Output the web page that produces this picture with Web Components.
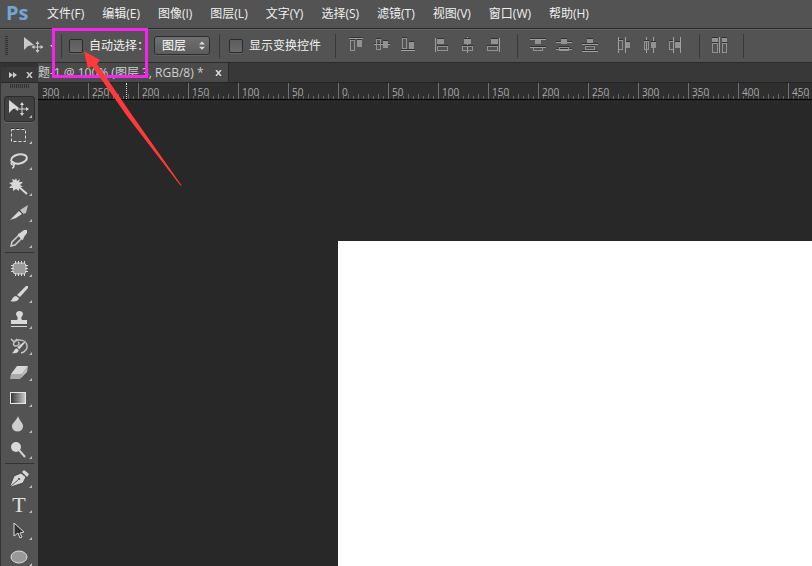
<!DOCTYPE html>
<html lang="zh-CN">
<head>
<meta charset="utf-8">
<title>Ps</title>
<style>
html,body{margin:0;height:100%;background:#282828;overflow:hidden}
body{font:12px/16px "Open Sans","Noto Sans CJK SC",sans-serif;color:#f0f0f0}
</style>
</head>
<body>
<ps-app></ps-app>
<script>
const define = (name, html, setup) => customElements.define(name, class extends HTMLElement {
  connectedCallback() {
    if (this.shadowRoot) return;
    const root = this.attachShadow({mode: 'open'});
    root.innerHTML = '<style>*{box-sizing:border-box}button{font:inherit;color:inherit;background:none;border:0;padding:0;margin:0}svg{display:block}</style>' + html;
    if (setup) setup(root, this);
  }
});

define('ps-menu-bar', `
<style>
:host{display:flex;align-items:center;height:28px;flex:none;background:#535353;padding-left:6px}
.logo{font:bold 20px/24px "Open Sans",sans-serif;color:#73a5d8;width:41px;padding-bottom:2px}
nav{display:flex;flex:0 1 542px;justify-content:space-between;white-space:nowrap}
</style>
<span class="logo">Ps</span><nav></nav>`, root => {
  const nav = root.querySelector('nav');
  for (const t of ['文件(F)','编辑(E)','图像(I)','图层(L)','文字(Y)','选择(S)','滤镜(T)','视图(V)','窗口(W)','帮助(H)']) {
    const b = document.createElement('button');
    b.textContent = t;
    nav.append(b);
  }
});

define('ps-check', `
<style>
:host{display:block}
label{display:flex;align-items:center;gap:6px;white-space:nowrap}
input{appearance:none;width:14px;height:14px;margin:0;border:1px solid #2b2b2b;border-radius:2px;background:linear-gradient(#5c5c5c,#6a6a6a);box-shadow:0 1px #626262}
</style>
<label><input type="checkbox"><span><slot></slot></span></label>`);

/* Alignment glyphs: H = hollow box, F = filled box, L = rule */
const H = (x,y,w,h) => `<rect x="${x+.5}" y="${y+.5}" width="${w-1}" height="${h-1}" fill="none" stroke="#929292"/><path d="M${x} ${y-.5}h${w}" stroke="#333"/>`;
const F = (x,y,w,h) => `<rect x="${x}" y="${y}" width="${w}" height="${h}" fill="#929292"/><path d="M${x} ${y-.5}h${w}" stroke="#333"/>`;
const L = (x,y,w,h) => `<rect x="${x}" y="${y}" width="${w}" height="${h}" fill="#a0a0a0"/>` + (w > h ? `<rect x="${x}" y="${y-1}" width="${w}" height="1" fill="#333"/>` : '');
const ALIGN = [
  ['顶对齐', H(3,5,5,11)+F(10,5,5,7)+L(2,3,14,1)],
  ['垂直居中对齐', L(1,9,16,1)+H(3,4,5,11)+F(10,6,5,7)],
  ['底对齐', H(3,3,5,11)+F(10,7,5,7)+L(2,15,14,1)],
  null,
  ['左对齐', F(4,4,7,5)+H(4,11,11,5)+L(2,3,1,14)],
  ['水平居中对齐', L(8,2,1,16)+F(5,4,7,5)+H(3,11,11,5)],
  ['右对齐', F(6,4,7,5)+H(2,11,11,5)+L(14,3,1,14)],
  'sep',
  ['按顶分布', F(6,5,6,4)+H(4,12,10,4)+L(1,4,16,1)+L(1,12,16,1)],
  ['按中分布', L(1,7,16,1)+L(1,14,16,1)+F(6,4,6,5)+H(4,12,10,4)],
  ['按底分布', F(6,4,6,4)+H(4,11,10,4)+L(1,9,16,1)+L(1,16,16,1)],
  null,
  ['按左分布', H(3,5,5,10)+F(10,7,5,6)+L(3,2,1,16)+L(10,2,1,16)],
  ['按中线分布', L(5,2,1,16)+L(12,2,1,16)+H(3,6,5,9)+F(10,7,5,6)],
  ['按右分布', H(2,6,5,9)+F(8,7,5,6)+L(6,2,1,16)+L(13,2,1,16)],
  'sep',
  ['自动对齐', F(1,3,6,4)+H(1,8,6,10)+L(8,2,1,16)+F(11,3,5,4)+H(11,8,5,10)],
  'sep'
];
define('ps-options-bar', `
<style>
:host{display:flex;align-items:center;height:35px;flex:none;background:#535353;border-top:1px solid #2b2b2b;border-bottom:1px solid #2b2b2b;box-shadow:inset 0 1px #646464;white-space:nowrap;padding-left:5px}
.grip{width:3px;height:20px;margin-right:15px;background:repeating-linear-gradient(#303030 0 1px,#535353 1px 2px)}
.tool{width:34px;height:20px}
.sep{width:1px;height:24px;background:#383838;flex:none}
.s1{margin-left:4px}
.s2{margin-left:14px}
ps-check{margin-left:7px}
.wide{margin-left:9px}
select{appearance:none;font:inherit;color:#fff;width:56px;height:19px;padding:0 7px;margin-left:5px;margin-right:9px;border:1px solid #2c2c2c;border-radius:3px;background:linear-gradient(#707070,#5b5b5b);box-shadow:0 1px #616161}
.pick{position:relative;display:flex}
.pick svg{position:absolute;right:14px;top:5px;pointer-events:none}
.align{display:flex;align-items:center;gap:8px;margin-left:12px}
.align svg{fill:none}
.gap{width:0}
.align .sep{margin:0 4px 0 5px}
</style>
<span class="grip"></span>
<svg class="tool" viewBox="0 0 34 20"><path d="M1 1v13l4-4 6-1z" fill="#c9c9c9"/><path d="M14.500 6v10M9.500 11h10" stroke="#c9c9c9"/><path d="m12.500 8 2-3 2 3zm0 6 2 3 2-3zm-1-5-3 2 3 2zm6 0 3 2-3 2z" fill="#c9c9c9"/><path d="M27 9h5l-2.500 3z" fill="#c9c9c9"/></svg>
<span class="sep s1"></span>
<ps-check>自动选择：</ps-check>
<span class="pick"><select aria-label="自动选择"><option>图层</option><option>组</option></select><svg viewBox="0 0 8 11" width="6" height="9"><path d="m0 4 4-4 4 4zm0 3 4 4 4-4z" fill="#ddd"/></svg></span>
<span class="sep"></span>
<ps-check class="wide">显示变换控件</ps-check>
<span class="sep s2"></span>
<div class="align"></div>`, root => {
  root.querySelector('.align').innerHTML = ALIGN.map(a => a === null ? '<span class="gap"></span>' : a === 'sep' ? '<span class="sep"></span>' :
    `<button aria-label="${a[0]}"><svg width="18" height="18" viewBox="1 2 18 18">${a[1]}</svg></button>`).join('');
});

const TOOLS = [
  ['移动', '<path d="M2 3v13l4-4 6-1z"/><path d="M15 6.500v11M9.500 12h11" stroke="#d8d8d8"/><path d="m13 8 2-3 2 3zm0 8 2 3 2-3zm-2-6-3 2 3 2zm8 0 3 2-3 2z"/>'],
  ['矩形选框', '<path d="M4.500 6.500h14v12h-14z" fill="none" stroke="#ddd" stroke-dasharray="3 2"/><path d="M4 5.500h15" stroke="#333" stroke-dasharray="3 2"/>'],
  ['套索', '<ellipse cx="12" cy="10" rx="8" ry="4.500" transform="rotate(-12 12 10)" fill="none" stroke="#d8d8d8" stroke-width="2"/><path d="M6 13c-3 0-2 3 0 3s2-3-.5-3M7 16c0 2-1 3-2 3" fill="none" stroke="#d8d8d8" stroke-width="1.500"/>'],
  ['魔棒', '<path d="m9 3 1 3 3-2-1 3 4 0-3 3 3 2-4 0 0 4-3-2-3 2 0-3-4 0 3-3-3-2 4-1-1-3 3 1z"/><path d="m12 12 8 7" stroke="#d8d8d8" stroke-width="2"/>'],
  ['切片', '<path d="m13 9 8-5-2 8-3 1z" fill="#c0c0c0"/><path d="m3 19 9-9 3 3-6 4z"/><path d="m12 9 4 4" stroke="#3a3a3a"/>'],
  ['吸管', '<path d="m4 19 1-4 7-7 3 3-7 7z" fill="none" stroke="#ccc" stroke-width="1.500"/><path d="m11 7 2-1 4-3 3 0 0 3-3 4-1 3-2-1-3-4z"/>'],
  ['修补', '<rect x="6" y="7" width="13" height="11" rx="3" fill="#999"/><path d="M8.500 5v3m3-3v3m3-3v3m3-3v3m-9 9v3m3-3v3m3-3v3m3-3v3M4 9.500h3m-3 3h3m-3 3h3m11-6h3m-3 3h3m-3 3h3" stroke="#e0e0e0"/><rect x="6" y="7" width="13" height="11" rx="3" fill="none" stroke="#ccc"/>'],
  ['画笔', '<path d="m10 13 9-9 2 0 0 2-8 9z"/><path d="M3 19c3 0 1-4 6-5l3 2c-1 4-5 4-9 3z"/>'],
  ['图章', '<path d="M10 12c2-3-1-4-1-6 0-4 7-4 7 0 0 2-3 3-1 6h5v4H4v-4zM4 18h16v1H4z"/>'],
  ['历史画笔', '<path d="M14 19c9-2 8-14-3-13-5 1-6 6-2 6 3 0 4-3 2-4M4 5l3 3 3-3" fill="none" stroke="#c4c4c4" stroke-width="1.500"/><path d="m10 13 9-7 0 2-7 8zM4 19c3 0 2-4 6-5l2 2c-1 4-4 4-8 3z" stroke="#444" stroke-width=".5"/>'],
  ['橡皮', '<path d="m10 6h11l-6 8H4z"/><path d="M4 14h11l-2 5H3z" fill="#aaa"/><path d="m15 14 6-8-1 6-7 7z" fill="#c0c0c0"/>'],
  ['渐变', '<defs><linearGradient id="g"><stop stop-color="#333"/><stop offset="1" stop-color="#ccc"/></linearGradient></defs><rect x="3.500" y="6.500" width="15" height="11" fill="url(#g)" stroke="#e8e8e8"/>'],
  ['模糊', '<path d="M11 4c1 4 6 8 5 11-1 6-10 6-11 0-1-3 5-7 6-11z" fill="#cfcfcf"/>'],
  ['减淡', '<circle cx="9" cy="9" r="5"/><path d="m12 12 6 7" stroke="#d0d0d0" stroke-width="2"/>'],
  ['钢笔', '<path d="m15 5 2-2 5 4-2 3z"/><path d="m14 6 5 4-3 6-12 4-1-1 4-10zM4 19l7-6" stroke="#383838" stroke-width=".8"/><circle cx="12" cy="12" r="1" fill="#383838"/>'],
  ['文字', 'T'],
  ['路径选择', '<path d="m7 4 10 9-4 1 2 4-2 1-2-5-4 3z" fill="#303030" stroke="#ddd"/>'],
  ['椭圆', '<ellipse cx="12" cy="12" rx="8" ry="6" fill="#999" stroke="#ddd"/>']
];
define('ps-tool-palette', `
<style>
:host{display:flex;flex-direction:column;width:38px;flex:none;overflow:hidden;background:#535353;border-left:1px solid #333;border-top:4px solid #333}
header{display:flex;justify-content:space-between;align-items:center;height:16px;flex:none;padding:0 5px 0 8px;background:#3a3a3a;border-bottom:1px solid #282828}
.grip{height:4px;flex:none;width:20px;margin:1px 9px 8px;background:repeating-linear-gradient(90deg,#303030 0 1px,#535353 1px 2px)}
.tools{display:flex;flex-direction:column;padding-left:3px}
.tools button{position:relative;width:31px;height:26px;flex:none;padding:0 2px;border:1px solid transparent;border-radius:3px}
.tools button.on{background:#404040;border-color:#2c2c2c;box-shadow:0 1px #656565}
.tools button svg{fill:#d8d8d8;overflow:visible;margin-top:-1px}
.corner{fill:#bbb}
hr{width:29px;margin:0 0 2px 1px;border:0;border-top:1px solid #333;flex:none}
.t{display:block;font:22px/24px "Liberation Serif",serif;color:#e0e0e0;width:24px;text-align:center}
.tools .t + svg{position:absolute;left:2px;top:0}
</style>
<header><svg width="8" height="6"><path d="m0 0 4 3-4 3zm4 0 4 3-4 3z" fill="#ccc"/></svg><svg width="7" height="6"><path d="m1 0 5 6M6 0 1 6" stroke="#ccc" stroke-width="1.500"/></svg></header>
<div class="grip"></div><div class="tools"></div>`, root => {
  root.querySelector('.tools').innerHTML = TOOLS.map(([n, d], i) =>
    (i === 6 || i === 14 ? '<hr>' : '') +
    `<button aria-label="${n}"${i ? '' : ' class="on"'}>${d === 'T' ? '<span class="t">T</span>' : ''}<svg width="24" height="24">${d === 'T' ? '' : d}<path class="corner" d="M25 18v3h-3z"/></svg></button>`).join('');
});

define('ps-ruler', `
<style>
:host{display:block;height:18px;flex:none;overflow:hidden;background:#2f2f2f;border-top:1px solid #242424;border-bottom:1px solid #000;color:#aaa;font:10px/12px "Open Sans",sans-serif;position:relative}
.scale{display:flex;height:16px}
.seg{width:50px;flex:none;padding:3px 0 0 3px;border-left:1px solid #707070;
background:repeating-linear-gradient(90deg,transparent 0 4px,#666 4px 5px,transparent 5px 10px) 0 100%/100% 3px no-repeat,repeating-linear-gradient(90deg,transparent 0 9px,#666 9px 10px) 0 100%/100% 5px no-repeat}
.seg:first-child{border-color:transparent}
.cursor{position:absolute;left:88px;top:0;bottom:0;border-left:1px dotted #ddd}
</style><div class="scale"></div><span class="cursor"></span>`, root => {
  const scale = root.querySelector('.scale');
  const draw = () => {
    scale.replaceChildren();
    for (let v = -300, x = 38; x < innerWidth; v += 50, x += 50) {
      const s = document.createElement('span');
      s.className = 'seg';
      s.textContent = Math.abs(v);
      scale.append(s);
    }
  };
  draw();
  addEventListener('resize', draw);
});

define('ps-document', `
<style>
:host{display:flex;flex-direction:column;flex:1;min-width:0;background:#282828}
.tabs{height:19px;flex:none;display:flex;background:#383838}
.tab{display:flex;align-items:center;gap:11px;padding-right:6px;background:#4a4a4a;border-right:1px solid #292929;color:#d0d0d0;white-space:nowrap}
.page{flex:1;margin:141px 0 0 300px;background:#fff}
</style>
<div class="tabs"><div class="tab"><span><slot></slot></span><button aria-label="关闭"><svg width="7" height="6"><path d="m1 0 5 6M6 0 1 6" stroke="#ddd" stroke-width="1.500"/></svg></button></div></div>
<ps-ruler></ps-ruler>
<div class="page"></div>`);

define('ps-annotation', `
<style>:host{position:absolute;left:0;top:0;pointer-events:none}</style>
<svg width="200" height="200"><rect x="53.500" y="29.500" width="93" height="47" fill="none" stroke="#f623ee" stroke-width="3"/><path d="M84 51 100 60 97 64 132 115 182 186 180 185 127 116 92 66 88 69z" fill="#ff3a3a"/></svg>`);

define('ps-app', `
<style>
:host{display:flex;flex-direction:column;height:100vh;position:relative}
main{display:flex;flex:1;min-height:0}
</style>
<ps-menu-bar></ps-menu-bar>
<ps-options-bar></ps-options-bar>
<main><ps-tool-palette></ps-tool-palette><ps-document>题-1 @ 100% (图层 3, RGB/8) *</ps-document></main>
<ps-annotation></ps-annotation>`);
</script>
</body>
</html>
